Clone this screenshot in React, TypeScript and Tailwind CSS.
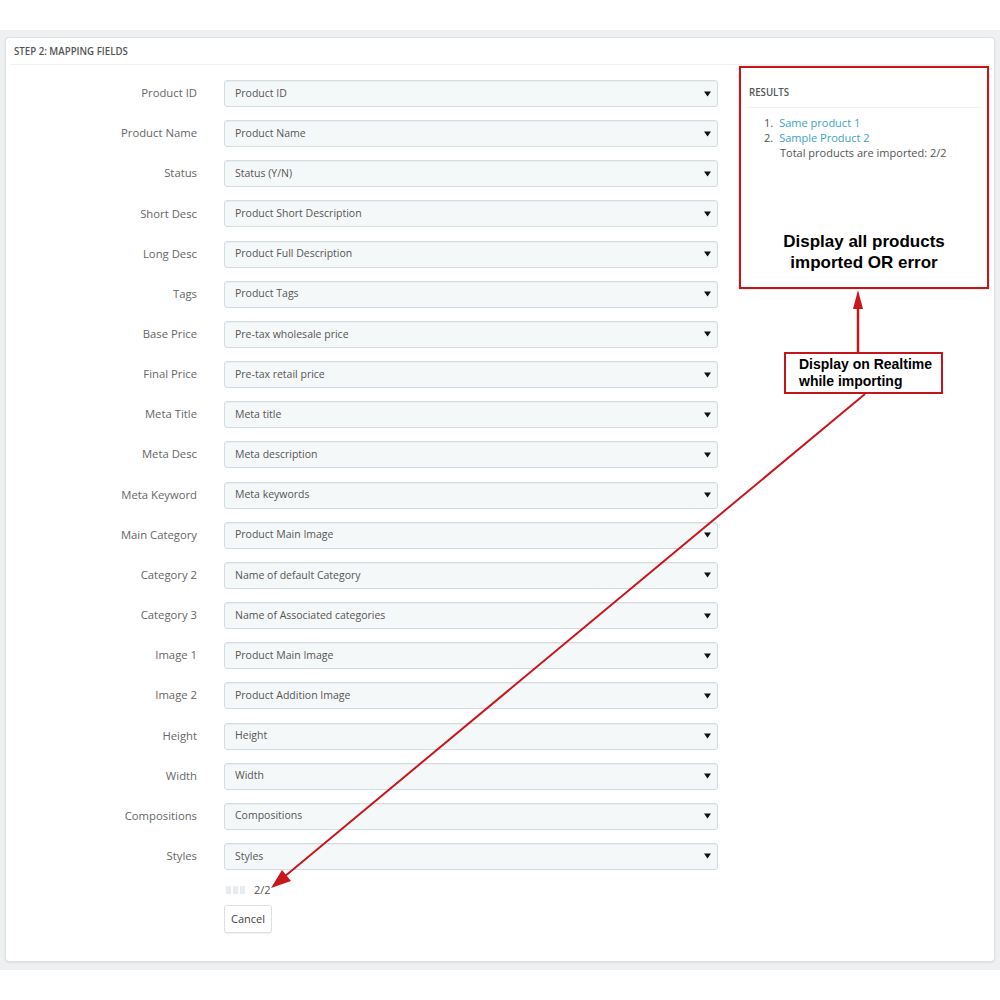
import React from 'react';

const FIELDS: [string, string][] = [
  ['Product ID', 'Product ID'],
  ['Product Name', 'Product Name'],
  ['Status', 'Status (Y/N)'],
  ['Short Desc', 'Product Short Description'],
  ['Long Desc', 'Product Full Description'],
  ['Tags', 'Product Tags'],
  ['Base Price', 'Pre-tax wholesale price'],
  ['Final Price', 'Pre-tax retail price'],
  ['Meta Title', 'Meta title'],
  ['Meta Desc', 'Meta description'],
  ['Meta Keyword', 'Meta keywords'],
  ['Main Category', 'Product Main Image'],
  ['Category 2', 'Name of default Category'],
  ['Category 3', 'Name of Associated categories'],
  ['Image 1', 'Product Main Image'],
  ['Image 2', 'Product Addition Image'],
  ['Height', 'Height'],
  ['Width', 'Width'],
  ['Compositions', 'Compositions'],
  ['Styles', 'Styles'],
];

const FakeSelect: React.FC<{ value: string }> = ({ value }) => (
  <div className="flex h-[27px] w-[494px] items-center justify-between rounded-[3px] border border-[#d3dde1] bg-[#f5f8f9] pl-[10px] pr-[6px] shadow-[inset_0_1px_1px_rgba(0,0,0,0.04)]">
    <span className="text-[10.5px] text-[#555]">{value}</span>
    <svg width="7" height="6" viewBox="0 0 7 6" aria-hidden="true">
      <path d="M0 0.5 H7 L3.5 5.5 Z" fill="#111" />
    </svg>
  </div>
);

/** Step 2 mapping screen with the results side panel and red callouts. */
export default function App() {
  return (
    <div className="relative h-[1000px] w-[1000px] bg-white font-['Open_Sans',sans-serif]">
      <div className="h-[30px]" />
      <div className="bg-[#eef0f2] px-[5px] pb-[8px] pt-[7px]">
        <div className="h-[925px] rounded-[4px] border border-[#dde1e4] bg-white shadow-[0_1px_2px_rgba(0,0,0,0.08)]">
          {/* Header */}
          <div className="mx-[4px] flex h-[27px] items-center border-b border-[#eef0f2] px-[4px]">
            <span className="origin-left scale-x-[0.88] text-[11px] font-semibold uppercase text-[#555]">
              Step 2: Mapping fields
            </span>
          </div>

          <div className="flex">
            {/* Mapping form */}
            <div className="flex w-[733px] flex-col pt-[15px]">
              <div className="flex flex-col gap-[13.16px]">
                {FIELDS.map(([label, value]) => (
                  <div key={label} className="flex items-center gap-[27px]">
                    <div className="w-[191px] text-right text-[11.3px] text-[#666]">{label}</div>
                    <FakeSelect value={value} />
                  </div>
                ))}
              </div>
              <div className="ml-[220px] mt-[12px] flex items-center gap-[9px]">
                <div className="flex gap-[2px]">
                  <span className="h-[8px] w-[5px] bg-[#e8ecee]" />
                  <span className="h-[8px] w-[5px] bg-[#e8ecee]" />
                  <span className="h-[8px] w-[5px] bg-[#e8ecee]" />
                </div>
                <span className="text-[11px] text-[#555]">2/2</span>
              </div>
              <button
                type="button"
                className="ml-[218px] mt-[7px] h-[28px] w-[48px] rounded-[3px] border border-[#dde1e4] bg-white text-[11px] text-[#444] shadow-[0_1px_1px_rgba(0,0,0,0.06)]"
              >
                Cancel
              </button>
            </div>

            {/* Results panel */}
            <div className="pt-[1px]">
              <div className="flex h-[223px] w-[250px] flex-col border-2 border-[#c3161c] px-[6px] shadow-[0_0_1px_rgba(195,22,28,0.5)]">
                <div className="mt-[10px] border-b border-[#eef0f2] px-[2px] pb-[5px]">
                  <span className="inline-block origin-left scale-x-[0.88] text-[11px] font-semibold uppercase text-[#555]">
                    Results
                  </span>
                </div>
                <ol className="mt-[7px] pl-[17px] text-[11px] leading-[15px] text-[#555]">
                  <li className="flex gap-[6px]">
                    <span>1.</span>
                    <span className="text-[#3ba3c6]">Same product 1</span>
                  </li>
                  <li className="flex gap-[6px]">
                    <span>2.</span>
                    <span className="text-[#3ba3c6]">Sample Product 2</span>
                  </li>
                  <li className="pl-[16px]">Total products are imported: 2/2</li>
                </ol>
                <div className="mt-[71px] text-center font-['Liberation_Sans',Arial,sans-serif] text-[17px] font-bold leading-[21px] text-black">
                  Display all products
                  <br />
                  imported OR error
                </div>
              </div>
            </div>
          </div>
        </div>
      </div>

      {/* Callout box */}
      <div className="absolute left-[784px] top-[352px] h-[42px] w-[159px] border-2 border-[#c3161c] bg-white pl-[13px] pt-[2px] font-['Liberation_Sans',Arial,sans-serif] text-[14px] font-bold leading-[17px] text-black">
        Display on Realtime
        <br />
        while importing
      </div>

      {/* Arrows */}
      <svg className="pointer-events-none absolute left-0 top-0" width="1000" height="1000" aria-hidden="true">
        <line x1="858" y1="352" x2="858" y2="304" stroke="#c8161d" strokeWidth="2.5" />
        <path d="M858 290 L863 309 L853 309 Z" fill="#c8161d" />
        <line x1="865" y1="394" x2="284" y2="877" stroke="#c8161d" strokeWidth="2" />
        <path d="M271 888 L291 881 L282 870 Z" fill="#c8161d" />
      </svg>
    </div>
  );
}
